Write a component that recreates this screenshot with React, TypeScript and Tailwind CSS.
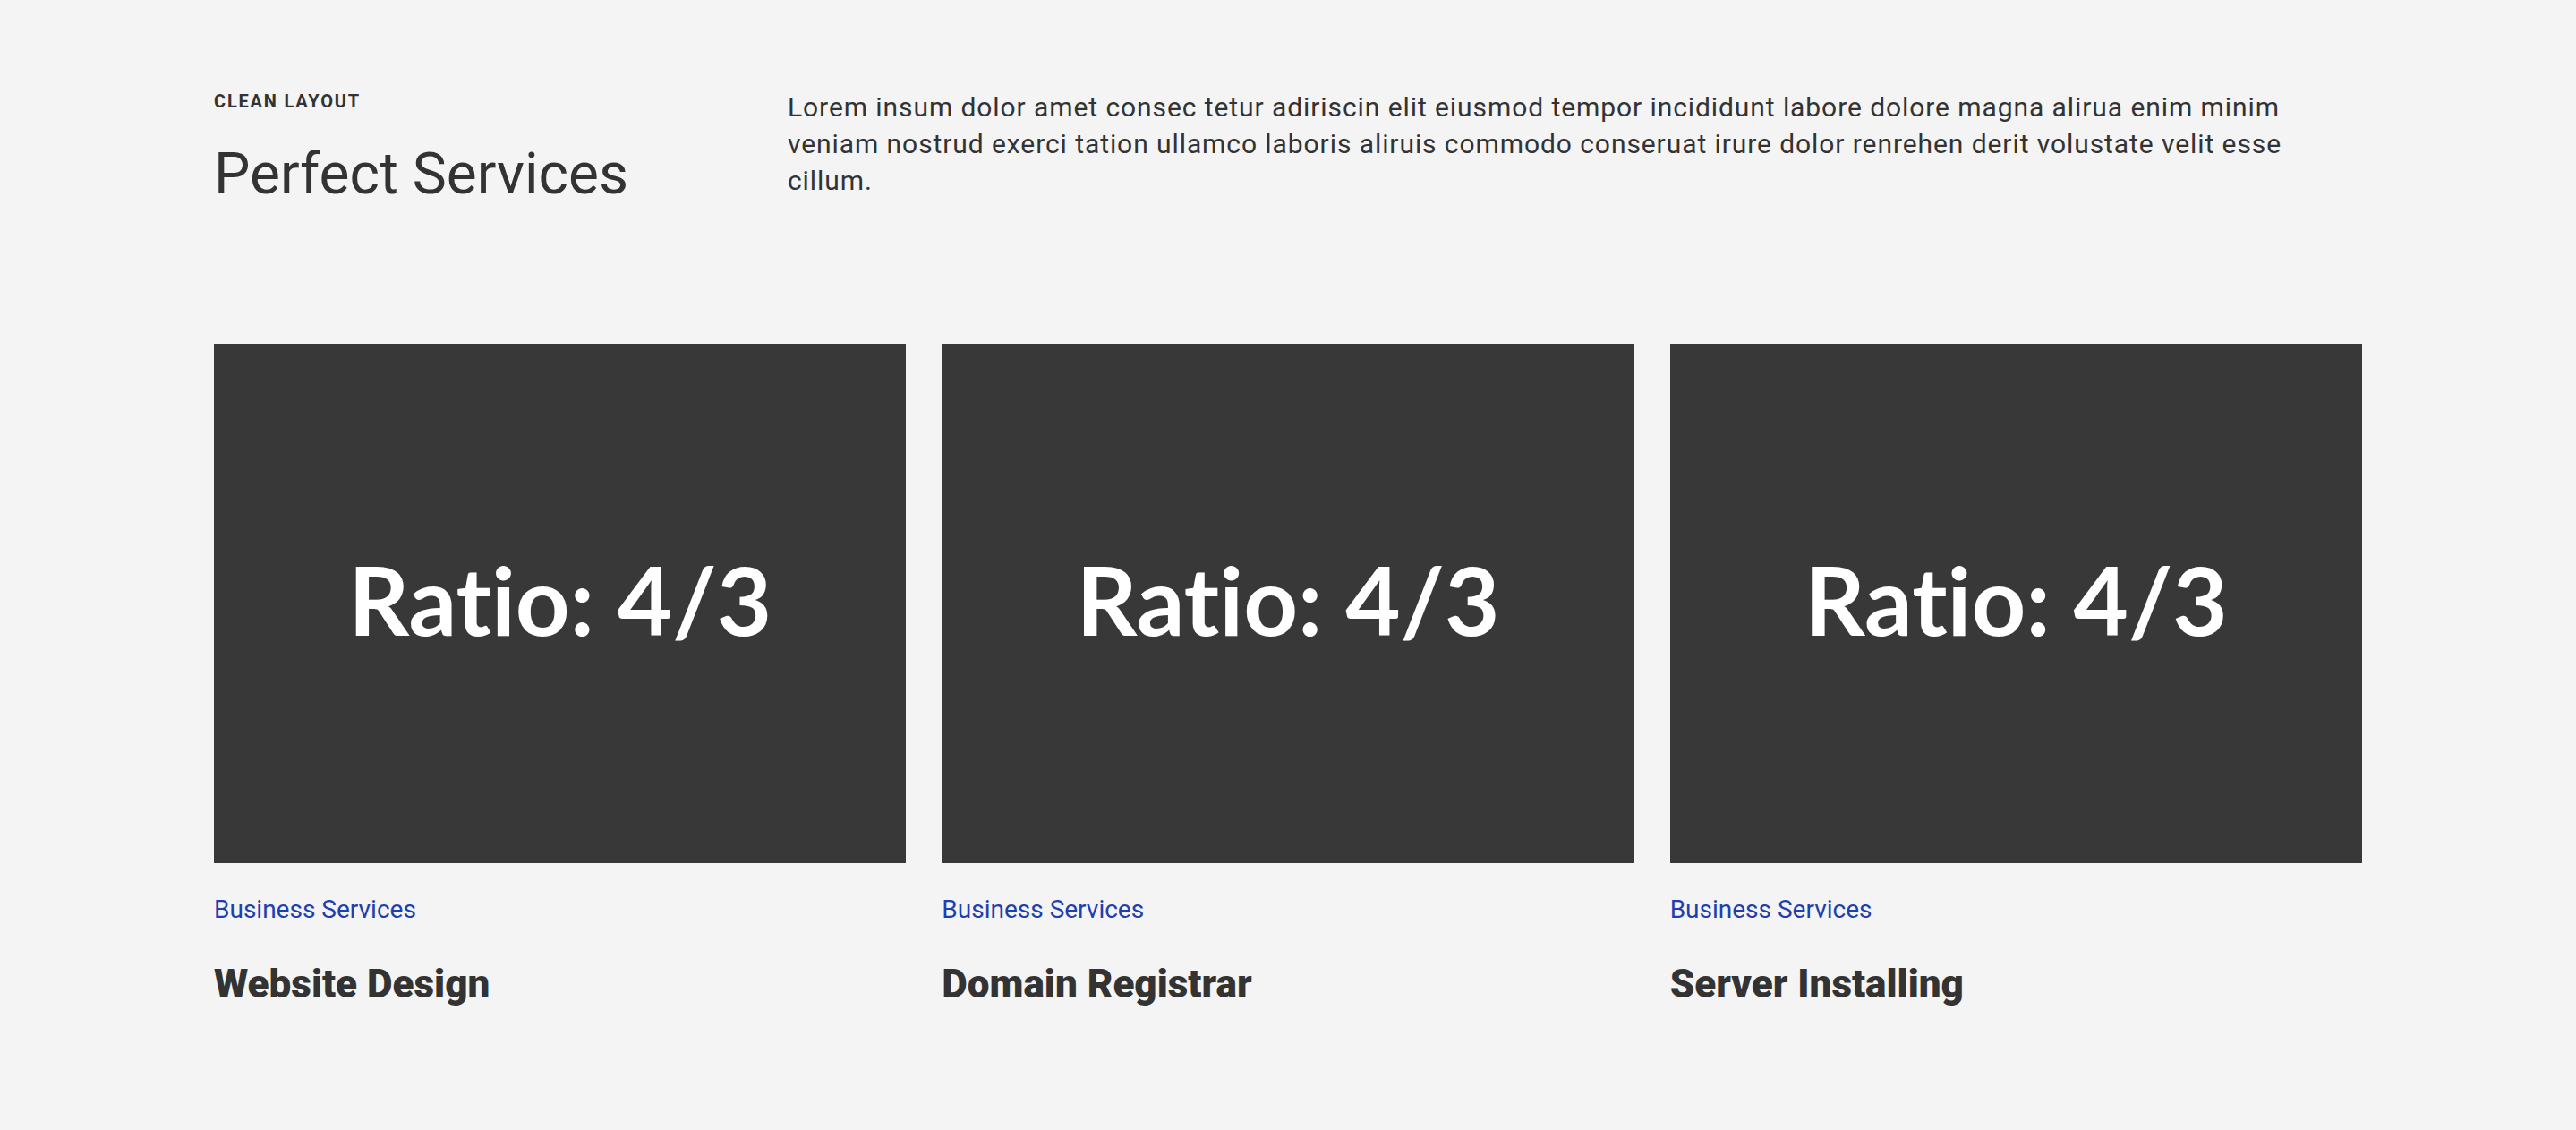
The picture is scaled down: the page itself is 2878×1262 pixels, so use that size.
const services = [
  { tag: "Business Services", title: "Website Design" },
  { tag: "Business Services", title: "Domain Registrar" },
  { tag: "Business Services", title: "Server Installing" },
];

function ServiceCard({ tag, title }: { tag: string; title: string }) {
  return (
    <div className="flex flex-col">
      <div className="aspect-[4/3] w-full bg-[#383838] flex items-center justify-center pb-[10px]">
        <span className="font-['Lato'] font-bold text-[106px] leading-none text-white [font-variant-ligatures:none]">
          Ratio: 4/3
        </span>
      </div>
      <p className="mt-[34px] text-[28px] leading-[36px] text-[#1e40af]">{tag}</p>
      <h3 className="mt-[39px] text-[44px] leading-[53px] font-black text-[#333333]">
        {title}
      </h3>
    </div>
  );
}

export default function App() {
  return (
    <div className="min-h-screen bg-[#f4f4f4] font-['Roboto',sans-serif] text-[#333333]">
      <div className="mx-auto w-[2400px] pt-[99px] pb-20">
        <div className="grid grid-cols-[641px_1720px]">
          <div>
            <p className="text-[20px] leading-[28px] font-bold tracking-[0.09em] uppercase">
              Clean Layout
            </p>
            <h2 className="mt-[36px] text-[64px] leading-[64px] font-normal">
              Perfect Services
            </h2>
          </div>
          <p className="text-[30px] leading-[41px] tracking-[0.92px]">
            Lorem insum dolor amet consec tetur adiriscin elit eiusmod tempor incididunt
            labore dolore magna alirua enim minim veniam nostrud exerci tation ullamco
            laboris aliruis commodo conseruat irure dolor renrehen derit volustate velit
            esse cillum.
          </p>
        </div>
        <div className="mt-[157px] grid grid-cols-3 gap-10">
          {services.map((s) => (
            <ServiceCard key={s.title} tag={s.tag} title={s.title} />
          ))}
        </div>
      </div>
    </div>
  );
}
